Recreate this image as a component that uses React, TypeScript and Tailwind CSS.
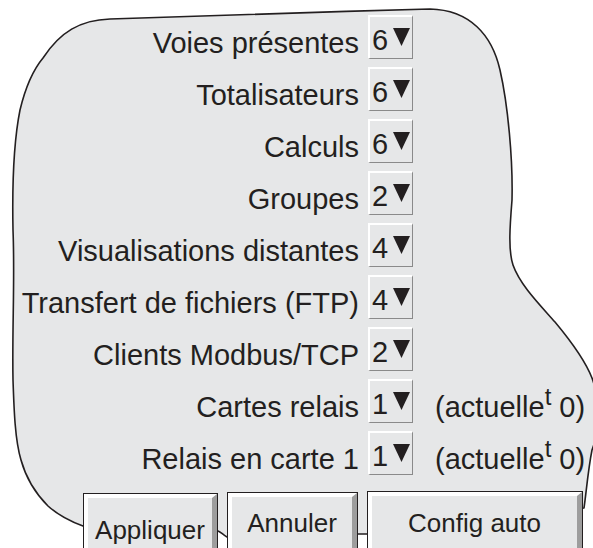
import React from 'react'

interface Row {
  label: string
  value: string
  actuelle?: boolean
}

const ROWS: Row[] = [
  { label: 'Voies présentes', value: '6' },
  { label: 'Totalisateurs', value: '6' },
  { label: 'Calculs', value: '6' },
  { label: 'Groupes', value: '2' },
  { label: 'Visualisations distantes', value: '4' },
  { label: 'Transfert de fichiers (FTP)', value: '4' },
  { label: 'Clients Modbus/TCP', value: '2' },
  { label: 'Cartes relais', value: '1', actuelle: true },
  { label: 'Relais en carte 1', value: '1', actuelle: true },
]

// contour "déchiré" du panneau, dessiné derrière le contenu
const OUTLINE =
  'M 83 526 C 72 522, 58 515, 48 506 C 36 494, 26 478, 21 460 C 15 440, 14 410, 13 380 ' +
  'C 12 330, 15 280, 13 230 C 12 180, 14 140, 20 110 C 26 85, 33 70, 43 58 ' +
  'C 60 32, 80 20, 110 19 C 200 16, 320 12, 430 9 C 470 10, 492 35, 500 70 ' +
  'C 508 105, 513 160, 512 200 C 510 225, 508 250, 513 265 C 520 285, 540 305, 555 322 ' +
  'C 570 340, 585 360, 592 378 C 600 400, 600 430, 592 450 C 588 470, 586 495, 584 508 ' +
  'L 367 534 L 358 534 L 227 537 C 223 535, 221 532, 218 531 L 83 526 Z'

function Dropdown({ value }: { value: string }) {
  return (
    <div className="ml-[9px] flex h-[44px] w-[45px] items-start border-t-2 border-l-2 border-r border-b border-t-white border-l-white border-r-[#8a8a8a] border-b-[#8a8a8a]">
      <span className="pl-[2px] text-[29px] leading-[46px]">{value}</span>
      <svg className="ml-[5px] mt-[11px]" width="17" height="18" viewBox="0 0 17 18">
        <path d="M0 0 L17 0 L8.5 18 Z" fill="#231f20" />
      </svg>
    </div>
  )
}

function Button({ label, className, leading }: { label: string; className: string; leading: string }) {
  return (
    <div className={`h-[80px] border-t border-l border-r border-[#231f20] ${className}`}>
      <div className={`h-full border-t-4 border-l-4 border-r-[5px] border-t-white border-l-white border-r-[#9d9d9d] bg-[#e6e7e8] text-center text-[26px] ${leading}`}>
        {label}
      </div>
    </div>
  )
}

export default function App() {
  return (
    <div className="relative h-[548px] w-[593px] overflow-hidden bg-white font-['Liberation_Sans',Arial,sans-serif] text-[#231f20]">
      <svg className="absolute inset-0" width="593" height="548" viewBox="0 0 593 548">
        <path d={OUTLINE} fill="#e6e7e8" stroke="#231f20" strokeWidth="1.6" strokeLinejoin="round" />
      </svg>

      <div className="relative flex flex-col pt-[15px]">
        <div className="flex flex-col gap-[8px]">
          {ROWS.map((row) => (
            <div key={row.label} className="flex h-[44px] items-start">
              <div className="w-[359px] whitespace-nowrap text-right text-[29px] leading-[56px]">{row.label}</div>
              <Dropdown value={row.value} />
              {row.actuelle && (
                <div className="ml-[22px] whitespace-nowrap text-[29px] leading-[56px]">
                  (actuelle<sup className="text-[24px]">t</sup> 0)
                </div>
              )}
            </div>
          ))}
        </div>

        <div className="mt-[16px] flex items-start gap-[9px] pl-[83px]">
          <Button label="Appliquer" className="mt-[2px] w-[135px]" leading="leading-[64px]" />
          <Button label="Annuler" className="mt-[1px] w-[131px]" leading="leading-[52px]" />
          <Button label="Config auto" className="w-[216px]" leading="leading-[54px]" />
        </div>
      </div>
    </div>
  )
}
